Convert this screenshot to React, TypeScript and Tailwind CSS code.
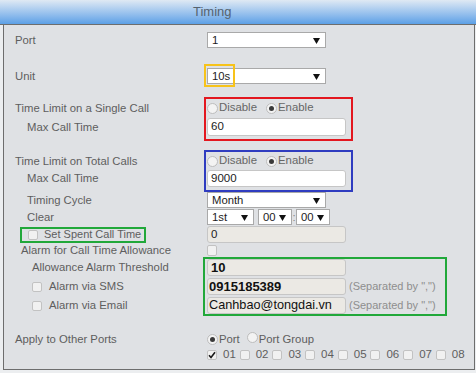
import React from "react";

function Arrow() {
  return (
    <svg width="7" height="6" viewBox="0 0 7 6" className="absolute right-[5px] top-[5px]">
      <path d="M0 0H7L3.5 6Z" fill="#111" />
    </svg>
  );
}

function Sel({ v, cls }: { v: string; cls: string }) {
  return (
    <div className={`relative h-[16px] border border-[#a9a9a9] bg-white flex items-center pl-[4px] text-[#1c1c1c] shrink-0 ${cls}`}>
      {v}
      <Arrow />
    </div>
  );
}

function Radio({ checked }: { checked?: boolean }) {
  return (
    <span className="inline-flex w-[11px] h-[11px] rounded-full border border-[#bdbdbd] bg-[#f3f3f3] items-center justify-center shrink-0">
      {checked && <span className="w-[5px] h-[5px] rounded-full bg-[#3a3a3a]" />}
    </span>
  );
}

function Check({ checked }: { checked?: boolean }) {
  return (
    <span className="inline-flex w-[10px] h-[10px] rounded-[2px] border border-[#c2c2c2] bg-[#f1f1f1] items-center justify-center shrink-0">
      {checked && (
        <svg width="8" height="8" viewBox="0 0 8 8">
          <path d="M1 4.2L3 6.5L7 1.2" stroke="#1a1a1a" strokeWidth="1.6" fill="none" />
        </svg>
      )}
    </span>
  );
}

function Inp({ v, cls }: { v: string; cls: string }) {
  return (
    <div className={`w-[139px] border border-[#c6c6c6] rounded-[3px] flex items-center shrink-0 ${cls}`}>{v}</div>
  );
}

export default function App() {
  const ports = ["01", "02", "03", "04", "05", "06", "07", "08"];
  return (
    <div className="w-[476px] h-[373px] bg-[#eceef0] font-['Liberation_Sans',Arial,sans-serif] text-[11.3px] text-[#5e5e5e] overflow-hidden">
      <div className="h-[25px] border-b border-[#6d6d6d] bg-linear-to-b from-[#dfe9f3] to-[#5ca0e6] pl-[193px] flex items-center text-[13px] text-[#56636f]">
        Timing
      </div>
      <div className="ml-[3px] w-[472px] h-[345px] border-l border-r border-b border-[#6d6d6d] bg-[#dfe1e4] pl-[11px] pt-[7px] flex flex-col">
        {/* Port */}
        <div className="flex items-center h-[16px]">
          <div className="w-[192px]">Port</div>
          <Sel v="1" cls="w-[119px]" />
        </div>
        {/* Unit */}
        <div className="flex items-center h-[16px] mt-[20px]">
          <div className="w-[192px]">Unit</div>
          <div className="relative">
            <Sel v="10s" cls="w-[119px]" />
            <span className="absolute left-[-3px] top-[-4px] w-[31px] h-[23px] border-2 border-[#f7c31a]" />
          </div>
        </div>
        {/* Single call */}
        <div className="flex mt-[13px]">
          <div className="w-[189px] flex flex-col pt-[2px]">
            <div className="h-[18px] flex items-center">Time Limit on a Single Call</div>
            <div className="h-[18px] mt-[1px] flex items-center pl-[12px]">Max Call Time</div>
          </div>
          <div className="w-[149px] h-[44px] border-2 border-[#e3171f] pl-[1px] pr-[5px] flex flex-col">
            <div className="h-[18px] flex items-center text-[#666] text-[11.4px]">
              <Radio />
              <span className="ml-[1px]">Disable</span>
              <span className="ml-[9px]"><Radio checked /></span>
              <span className="ml-[1px]">Enable</span>
            </div>
            <Inp v="60" cls="h-[18px] mt-[1px] bg-white pl-[3px] text-[#222] text-[11.5px]" />
          </div>
        </div>
        {/* Total calls */}
        <div className="flex mt-[9px]">
          <div className="w-[189px] flex flex-col pt-[2px]">
            <div className="h-[18px] flex items-center">Time Limit on Total Calls</div>
            <div className="h-[17px] flex items-center pl-[12px]">Max Call Time</div>
          </div>
          <div className="w-[149px] h-[42px] border-2 border-[#2f3cc0] pl-[1px] pr-[5px] flex flex-col">
            <div className="h-[18px] flex items-center text-[#666] text-[11.4px]">
              <Radio />
              <span className="ml-[1px]">Disable</span>
              <span className="ml-[9px]"><Radio checked /></span>
              <span className="ml-[1px]">Enable</span>
            </div>
            <Inp v="9000" cls="h-[17px] bg-white pl-[3px] text-[#222] text-[11.5px]" />
          </div>
        </div>
        {/* Timing cycle */}
        <div className="flex items-center h-[16px]">
          <div className="w-[192px] pl-[12px]">Timing Cycle</div>
          <Sel v="Month" cls="w-[119px]" />
        </div>
        {/* Clear */}
        <div className="flex items-center h-[16px] mt-[1px]">
          <div className="w-[192px] pl-[12px]">Clear</div>
          <Sel v="1st" cls="w-[47px]" />
          <Sel v="00" cls="w-[34px] ml-[4px]" />
          <span className="w-[4px] text-center text-[#888]">:</span>
          <Sel v="00" cls="w-[34px]" />
        </div>
        {/* Set spent */}
        <div className="flex items-center h-[17px] mt-[1px]">
          <div className="w-[192px] flex">
            <div className="ml-[5px] w-[126px] h-[16px] border-2 border-[#21a83a] flex items-center pl-[6px]">
              <Check />
              <span className="ml-[6px] text-[11px]">Set Spent Call Time</span>
            </div>
          </div>
          <Inp v="0" cls="h-[17px] bg-[#ebe9e4] pl-[3px] text-[#222] text-[11.5px]" />
        </div>
        {/* Alarm for */}
        <div className="flex items-center h-[14px]">
          <div className="w-[192px] pl-[6px]">Alarm for Call Time Allowance</div>
          <span className="inline-flex w-[10px] h-[11px] rounded-[2px] border border-[#c2c2c2] bg-[#f1f1f1]" />
        </div>
        {/* Green alarm block */}
        <div className="flex">
          <div className="w-[188px] flex flex-col pt-[2px] gap-[2px]">
            <div className="h-[17px] flex items-center pl-[17px]">Allowance Alarm Threshold</div>
            <div className="h-[17px] flex items-center pl-[17px]">
              <Check />
              <span className="ml-[7px]">Alarm via SMS</span>
            </div>
            <div className="h-[17px] flex items-center pl-[17px]">
              <Check />
              <span className="ml-[7px]">Alarm via Email</span>
            </div>
          </div>
          <div className="w-[244px] h-[59px] border-2 border-[#21a83a] pl-[2px] flex flex-col gap-[2px]">
            <Inp v="10" cls="h-[17px] bg-[#ebe9e4] pl-[3px] text-[#111] text-[13px] font-bold" />
            <div className="flex items-center">
              <Inp v="0915185389" cls="h-[17px] bg-[#ebe9e4] pl-[1px] text-[#111] text-[13px] font-bold" />
              <span className="ml-[3px] text-[11px] text-[#8e8e8e]">(Separated by ",")</span>
            </div>
            <div className="flex items-center">
              <Inp v="Canhbao@tongdai.vn" cls="h-[17px] bg-[#ebe9e4] pl-[1px] text-[#111] text-[12.7px]" />
              <span className="ml-[3px] text-[11px] text-[#8e8e8e]">(Separated by ",")</span>
            </div>
          </div>
        </div>
        {/* Apply */}
        <div className="flex items-center h-[16px] mt-[15px]">
          <div className="w-[192px]">Apply to Other Ports</div>
          <Radio checked />
          <span className="ml-[1px]">Port</span>
          <span className="ml-[7px]"><Radio /></span>
          <span className="ml-[1px]">Port Group</span>
        </div>
        <div className="flex items-center h-[14px] mt-[1px]">
          <div className="w-[192px]" />
          {ports.map((p, i) => (
            <div key={p} className="w-[32.7px] flex items-center shrink-0">
              <Check checked={i === 0} />
              <span className="ml-[6px] text-[11.5px]">{p}</span>
            </div>
          ))}
        </div>
      </div>
    </div>
  );
}
